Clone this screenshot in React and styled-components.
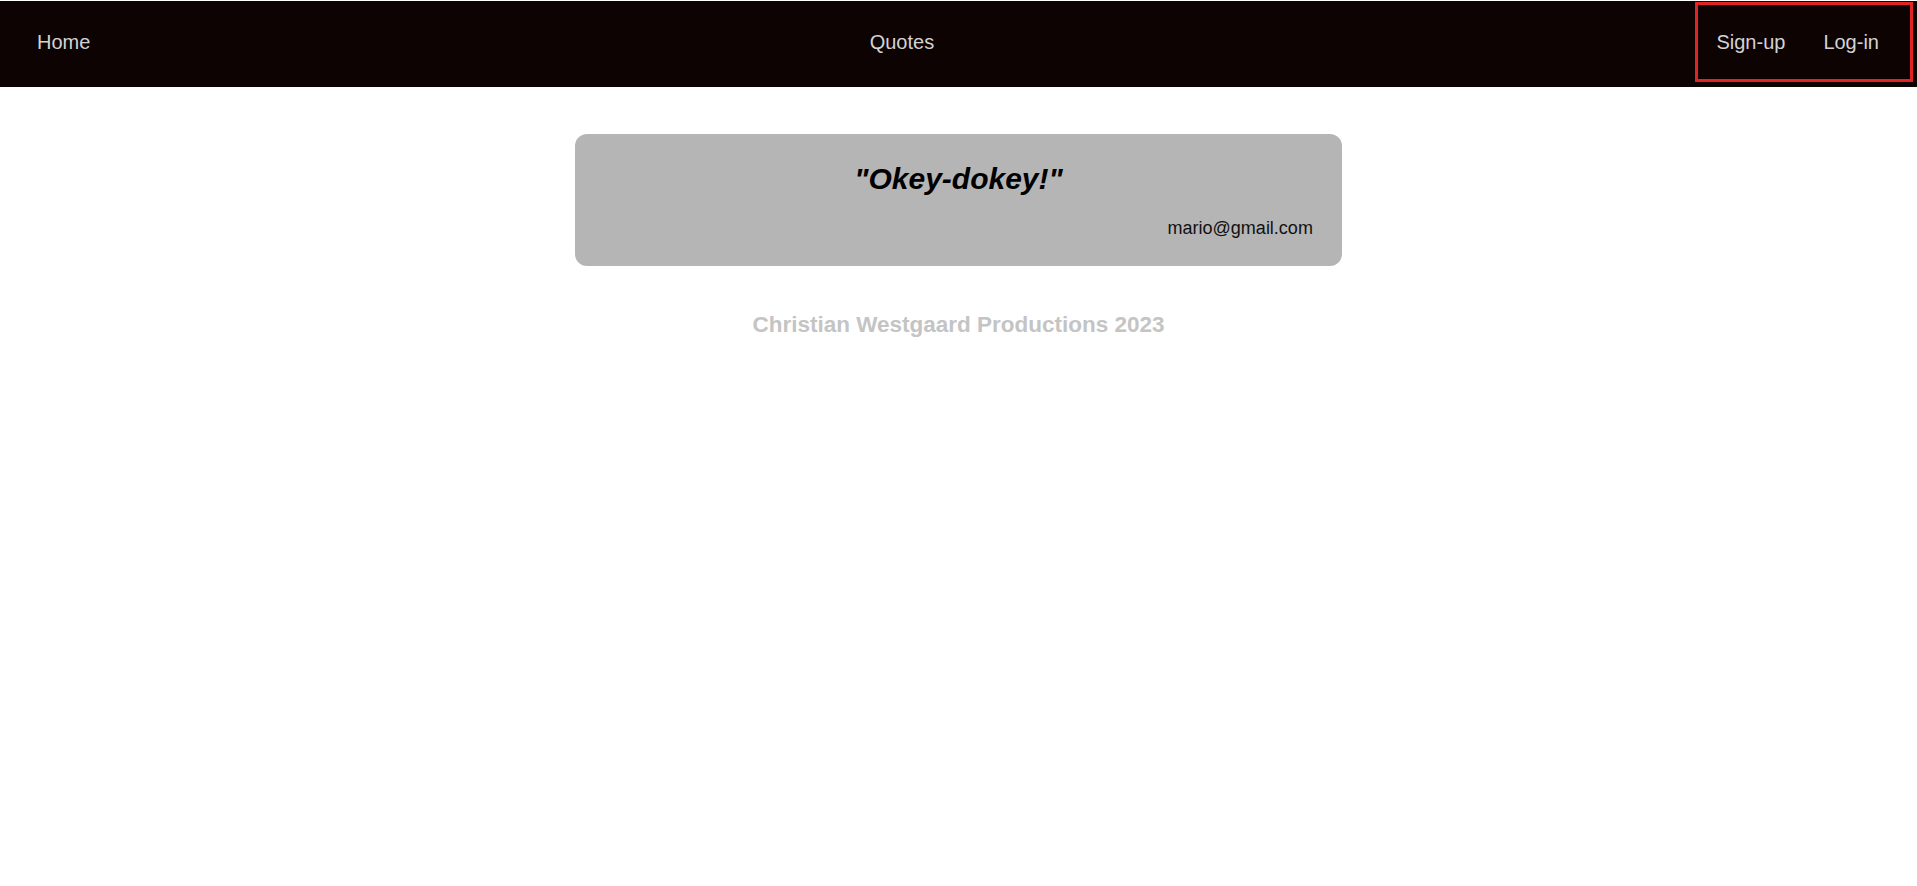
import React from 'react';
import styled, { createGlobalStyle } from 'styled-components';

const GlobalStyle = createGlobalStyle`
  body {
    margin: 0;
    background-color: #fff;
    font-family: "Liberation Sans", Arial, sans-serif;
  }
`;

const Navbar = styled.nav`
  display: flex;
  justify-content: space-between;
  align-items: center;
  height: 82px;
  margin-top: 1px;
  padding: 0 4px 4px 19px;
  background-color: #0d0303;
`;

const NavLink = styled.a`
  padding: 0 18px;
  color: #d3d3d3;
  font-size: 20px;
  text-decoration: none;
  cursor: pointer;
`;

const AuthBox = styled.div`
  display: flex;
  align-items: center;
  height: 74px;
  padding-right: 13px;
  border: 3px solid #e02424;

  ${NavLink}:last-child {
    padding-left: 20px;
  }
`;

const Main = styled.main`
  display: flex;
  flex-direction: column;
  align-items: center;
  padding-top: 47px;
`;

const QuoteCard = styled.div`
  width: 40%;
  box-sizing: border-box;
  padding: 28px 29px 27px;
  border-radius: 12px;
  background-color: #b5b5b5;
`;

const QuoteText = styled.h2`
  margin: 0 0 22px;
  font-size: 30px;
  font-style: italic;
  font-weight: bold;
  text-align: center;
  color: #000;
`;

const Author = styled.p`
  margin: 0;
  font-size: 18px;
  text-align: right;
  color: #111;
`;

const Footer = styled.footer`
  margin-top: 46px;
  font-size: 22.5px;
  font-weight: bold;
  color: #c4c4c4;
`;

const App = () => {
  return (
    <>
      <GlobalStyle />
      <Navbar>
        <NavLink>Home</NavLink>
        <NavLink>Quotes</NavLink>
        <AuthBox>
          <NavLink>Sign-up</NavLink>
          <NavLink>Log-in</NavLink>
        </AuthBox>
      </Navbar>
      <Main>
        <QuoteCard>
          <QuoteText>"Okey-dokey!"</QuoteText>
          <Author>mario@gmail.com</Author>
        </QuoteCard>
        <Footer>Christian Westgaard Productions 2023</Footer>
      </Main>
    </>
  );
};

export default App;
